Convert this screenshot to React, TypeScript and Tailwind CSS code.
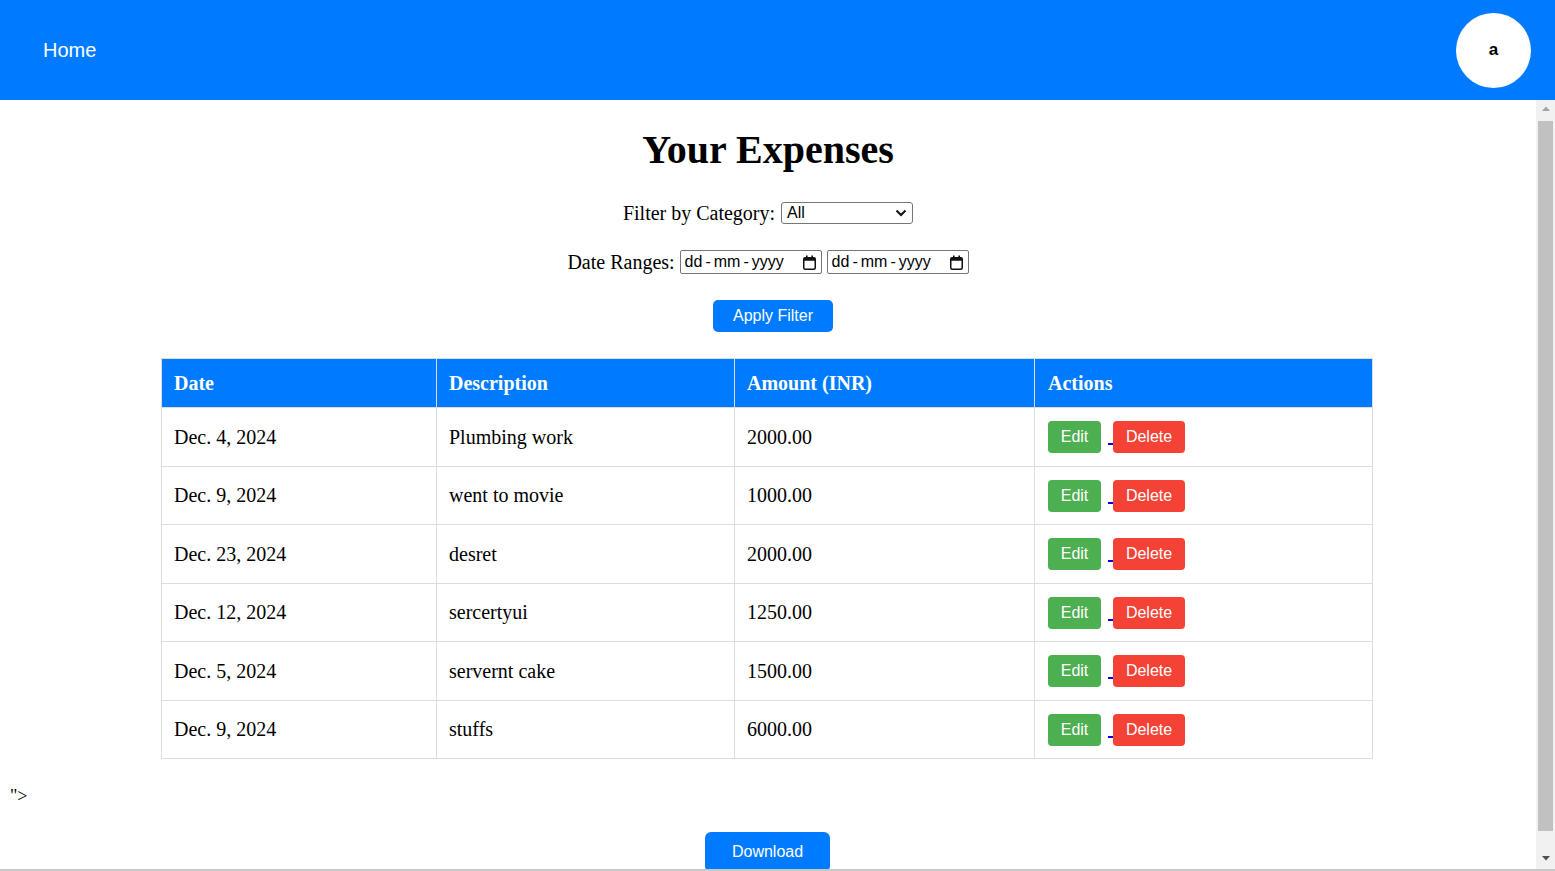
import React from "react";

const expenses = [
  { date: "Dec. 4, 2024", description: "Plumbing work", amount: "2000.00" },
  { date: "Dec. 9, 2024", description: "went to movie", amount: "1000.00" },
  { date: "Dec. 23, 2024", description: "desret", amount: "2000.00" },
  { date: "Dec. 12, 2024", description: "sercertyui", amount: "1250.00" },
  { date: "Dec. 5, 2024", description: "servernt cake", amount: "1500.00" },
  { date: "Dec. 9, 2024", description: "stuffs", amount: "6000.00" },
];

function CalendarIcon() {
  return (
    <svg width="13" height="15" viewBox="0 0 13 15" className="shrink-0">
      <rect x="0.75" y="2.75" width="11.5" height="11.5" rx="1.5" fill="none" stroke="#111" strokeWidth="1.5" />
      <rect x="0.75" y="2.75" width="11.5" height="3" fill="#111" />
      <rect x="3" y="0.5" width="1.6" height="3" fill="#111" />
      <rect x="8.4" y="0.5" width="1.6" height="3" fill="#111" />
    </svg>
  );
}

function DateField() {
  return (
    <div className="flex h-[24px] w-[142px] items-center justify-between rounded-[2px] border border-[#767676] bg-white pl-[4px] pr-[5px] font-['Liberation_Sans',Arial,sans-serif] text-[16px] leading-none text-black">
      <span className="flex items-center">
        <span>dd</span>
        <span className="px-[3px]">-</span>
        <span>mm</span>
        <span className="px-[3px]">-</span>
        <span>yyyy</span>
      </span>
      <CalendarIcon />
    </div>
  );
}

// page scrollbar drawn by hand, headless chrome hides the native one
function Scrollbar() {
  return (
    <div className="flex h-full w-[19px] shrink-0 flex-col bg-[#f1f1f1] pl-[2px] pr-[2px]">
      <div className="flex h-[17px] shrink-0 items-center justify-center">
        <svg width="8" height="5" viewBox="0 0 8 5">
          <path d="M0 5 L4 0.5 L8 5 Z" fill="#a3a3a3" />
        </svg>
      </div>
      <div className="flex-1 pt-[4px]">
        <div className="h-[710px] bg-[#c1c1c1]" />
      </div>
      <div className="flex h-[17px] shrink-0 items-center justify-center pb-[5px]">
        <svg width="8" height="5" viewBox="0 0 8 5">
          <path d="M0 0 L4 4.5 L8 0 Z" fill="#505050" />
        </svg>
      </div>
    </div>
  );
}

export default function App() {
  return (
    <div className="flex h-[871px] w-[1555px] flex-col overflow-hidden bg-white font-['Liberation_Serif','Times_New_Roman',serif] text-black">
      {/* top bar */}
      <header className="flex h-[100px] shrink-0 items-center justify-between bg-[#007bff] pl-[43px] pr-[24px]">
        <a href="#" className="font-['Liberation_Sans',Arial,sans-serif] text-[20px] text-white">
          Home
        </a>
        <div className="flex h-[75px] w-[75px] items-center justify-center rounded-full bg-white font-['Liberation_Sans',Arial,sans-serif] text-[17px] font-bold text-black">
          a
        </div>
      </header>

      <div className="flex h-[769px] shrink-0">
        <main className="flex-1 overflow-hidden">
          <h1 className="mt-[27px] h-[46px] text-center text-[40px] font-bold leading-[46px]">Your Expenses</h1>

          <div className="mt-[28px] flex h-[24px] items-center justify-center gap-[6px] text-[20px] leading-[23px]">
            <span>Filter by Category:</span>
            <div className="flex h-[22px] w-[132px] items-center justify-between rounded-[3px] border border-[#767676] pl-[5px] pr-[5px] font-['Liberation_Sans',Arial,sans-serif] text-[16px] leading-none">
              <span>All</span>
              <svg width="12" height="8" viewBox="0 0 12 8">
                <path d="M1.5 1.5 L6 6 L10.5 1.5" fill="none" stroke="#111" strokeWidth="2" />
              </svg>
            </div>
          </div>

          <div className="mt-[25px] flex h-[24px] items-center justify-center gap-[5px] text-[20px] leading-[23px]">
            <span>Date Ranges:</span>
            <DateField />
            <DateField />
          </div>

          <div className="mt-[26px] flex justify-center pl-[10px]">
            <button className="h-[32px] w-[120px] rounded-[5px] bg-[#007bff] font-['Liberation_Sans',Arial,sans-serif] text-[16px] text-white">
              Apply Filter
            </button>
          </div>

          <table className="ml-[161px] mt-[26px] w-[1212px] table-fixed border-collapse text-[20px]">
            <thead>
              <tr className="bg-[#007bff] text-white">
                <th className="w-[275px] border border-[#ddd] px-[12px] py-[12px] text-left font-bold leading-[24px]">Date</th>
                <th className="w-[298px] border border-[#ddd] px-[12px] py-[12px] text-left font-bold leading-[24px]">Description</th>
                <th className="w-[300px] border border-[#ddd] px-[12px] py-[12px] text-left font-bold leading-[24px]">Amount (INR)</th>
                <th className="border border-[#ddd] pl-[13px] pr-[12px] py-[12px] text-left font-bold leading-[24px]">Actions</th>
              </tr>
            </thead>
            <tbody>
              {expenses.map((e, i) => (
                <tr key={i} className="h-[58.5px]">
                  <td className="border border-[#ddd] px-[12px] align-middle">{e.date}</td>
                  <td className="border border-[#ddd] px-[12px] align-middle">{e.description}</td>
                  <td className="border border-[#ddd] px-[12px] align-middle">{e.amount}</td>
                  <td className="border border-[#ddd] pl-[13px] pr-[12px] align-middle">
                    <a href="#" className="text-[#0000ee] underline">
                      <button className="mr-[7px] w-[53px] rounded-[4px] bg-[#4caf50] py-[7px] font-['Liberation_Sans',Arial,sans-serif] text-[16px] leading-[18px] text-white">
                        Edit
                      </button>{" "}
                    </a>
                    <a href="#" className="text-[#0000ee]">
                      <button className="w-[72px] rounded-[4px] bg-[#f44336] py-[7px] font-['Liberation_Sans',Arial,sans-serif] text-[16px] leading-[18px] text-white">
                        Delete
                      </button>
                    </a>
                  </td>
                </tr>
              ))}
            </tbody>
          </table>

          <p className="ml-[10px] mt-[28px] h-[18px] text-[18px] leading-[18px]">"&gt;</p>

          <div className="mb-[24px] mt-[27px] flex justify-center pr-[1px]">
            <button className="h-[40px] w-[125px] rounded-[6px] bg-[#007bff] font-['Liberation_Sans',Arial,sans-serif] text-[16px] text-white">
              Download
            </button>
          </div>
        </main>
        <Scrollbar />
      </div>
      <div className="h-[2px] shrink-0 bg-[#c8c8c8]" />
    </div>
  );
}
